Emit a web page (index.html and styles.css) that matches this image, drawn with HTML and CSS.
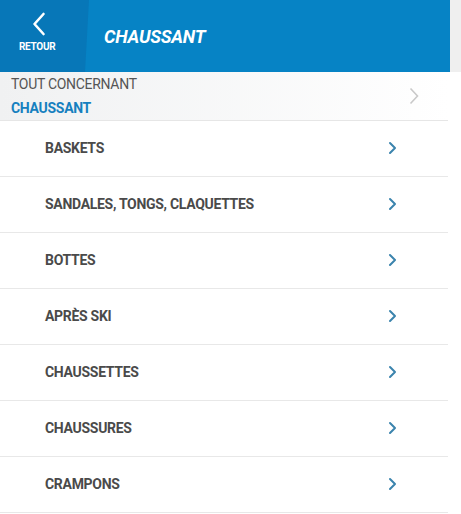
FILE: index.html
```html
<!DOCTYPE html>
<html lang="fr">
<head>
<meta charset="utf-8">
<title>Chaussant</title>
<link rel="stylesheet" href="styles.css">
</head>
<body>
<div class="top">
  <header class="header">
    <a class="back">
      <svg class="back-icon" width="14" height="24" viewBox="0 0 14 24"><path d="M11.5 2 L2.5 12 L11.5 22" fill="none" stroke="#fff" stroke-width="2.6" stroke-linecap="round" stroke-linejoin="round"/></svg>
      <span class="back-label">RETOUR</span>
    </a>
    <h1 class="title">CHAUSSANT</h1>
  </header>
  <div class="strip"></div>
</div>
<div class="panel">
  <a class="all">
    <div class="all-text">
      <span class="all-line1">TOUT CONCERNANT</span>
      <span class="all-line2">CHAUSSANT</span>
    </div>
    <svg class="all-chev" width="10" height="18" viewBox="0 0 10 18"><path d="M1.5 1.5 L8.5 9 L1.5 16.5" fill="none" stroke="#c9c9c9" stroke-width="1.6"/></svg>
  </a>
  <ul class="list">
    <li class="item"><span>BASKETS</span><svg class="chev" width="9" height="14" viewBox="0 0 9 14"><path d="M2 2 L7 7 L2 12" fill="none" stroke="#3b84ad" stroke-width="2" stroke-linecap="round" stroke-linejoin="round"/></svg></li>
    <li class="item"><span>SANDALES, TONGS, CLAQUETTES</span><svg class="chev" width="9" height="14" viewBox="0 0 9 14"><path d="M2 2 L7 7 L2 12" fill="none" stroke="#3b84ad" stroke-width="2" stroke-linecap="round" stroke-linejoin="round"/></svg></li>
    <li class="item"><span>BOTTES</span><svg class="chev" width="9" height="14" viewBox="0 0 9 14"><path d="M2 2 L7 7 L2 12" fill="none" stroke="#3b84ad" stroke-width="2" stroke-linecap="round" stroke-linejoin="round"/></svg></li>
    <li class="item"><span>APRÈS SKI</span><svg class="chev" width="9" height="14" viewBox="0 0 9 14"><path d="M2 2 L7 7 L2 12" fill="none" stroke="#3b84ad" stroke-width="2" stroke-linecap="round" stroke-linejoin="round"/></svg></li>
    <li class="item"><span>CHAUSSETTES</span><svg class="chev" width="9" height="14" viewBox="0 0 9 14"><path d="M2 2 L7 7 L2 12" fill="none" stroke="#3b84ad" stroke-width="2" stroke-linecap="round" stroke-linejoin="round"/></svg></li>
    <li class="item"><span>CHAUSSURES</span><svg class="chev" width="9" height="14" viewBox="0 0 9 14"><path d="M2 2 L7 7 L2 12" fill="none" stroke="#3b84ad" stroke-width="2" stroke-linecap="round" stroke-linejoin="round"/></svg></li>
    <li class="item"><span>CRAMPONS</span><svg class="chev" width="9" height="14" viewBox="0 0 9 14"><path d="M2 2 L7 7 L2 12" fill="none" stroke="#3b84ad" stroke-width="2" stroke-linecap="round" stroke-linejoin="round"/></svg></li>
  </ul>
</div>
</body>
</html>
```
FILE: styles.css
```css
html, body {
  margin: 0;
  padding: 0;
  background: #fff;
  font-family: Roboto, "Liberation Sans", sans-serif;
}
.top {
  display: flex;
  height: 72px;
}
.header {
  width: 450px;
  height: 72px;
  background: #0683c5;
  display: flex;
  align-items: center;
}
.strip {
  flex: 1;
  background: #efefef;
}
.back {
  width: 89px;
  height: 72px;
  background: #0777b8;
  clip-path: polygon(0 0, 89px 0, 85px 72px, 0 72px);
  display: flex;
  flex-direction: column;
  align-items: flex-start;
  box-sizing: border-box;
  padding: 12px 0 0 0;
}
.back-icon {
  margin-left: 32px;
  display: block;
}
.back-label {
  color: #fff;
  font-weight: 700;
  font-size: 10px;
  letter-spacing: -0.3px;
  margin: 5px 0 0 19px;
  line-height: 12px;
}
.title {
  margin: 0 0 0 15px;
  color: #fff;
  font-style: italic;
  font-weight: 700;
  font-size: 18px;
  letter-spacing: -0.2px;
}
.panel {
  width: 448px;
}
.all {
  display: flex;
  align-items: center;
  justify-content: space-between;
  height: 49px;
  background: linear-gradient(to right, #f0f1f2, #ffffff);
  border-bottom: 1px solid #e6e6e6;
  box-sizing: border-box;
  padding: 0 29px 0 11px;
}
.all-text {
  display: flex;
  flex-direction: column;
}
.all-line1 {
  color: #555;
  font-size: 14px;
  line-height: 24px;
  letter-spacing: -0.3px;
}
.all-line2 {
  color: #1680bf;
  font-size: 14px;
  font-weight: 700;
  line-height: 24px;
  letter-spacing: -0.3px;
}
.list {
  list-style: none;
  margin: 0;
  padding: 0;
}
.item {
  height: 56px;
  border-bottom: 1px solid #e8e8e8;
  box-sizing: border-box;
  display: flex;
  align-items: center;
  justify-content: space-between;
  padding: 0 51px 1px 45px;
  color: #4a4a4a;
  font-size: 14px;
  font-weight: 700;
  letter-spacing: -0.3px;
}
.chev {
  display: block;
}
```
